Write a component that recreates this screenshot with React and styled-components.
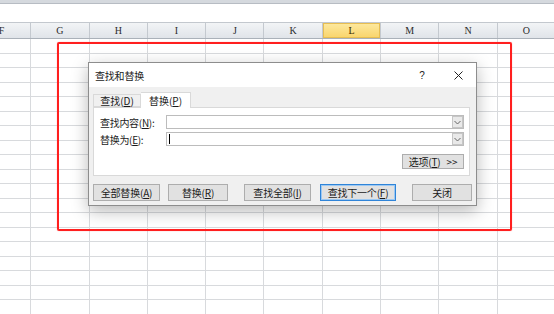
import React from 'react'
import styled, { createGlobalStyle } from 'styled-components'

const GlobalStyle = createGlobalStyle`
  html, body {
    margin: 0;
    padding: 0;
  }
  body {
    background: #fff;
    font-family: "Noto Sans CJK SC", "Noto Sans", sans-serif;
    color: #1a1a1a;
  }
`

const COLUMNS = ['F', 'G', 'H', 'I', 'J', 'K', 'L', 'M', 'N', 'O']
const ROW_COUNT = 20

const Screen = styled.div`
  position: relative;
  width: 554px;
  height: 314px;
  overflow: hidden;
  background: #fff;
`

const RibbonEdge = styled.div`
  height: 3px;
  background: #d5d9de;
  border-bottom: 1px solid #b7bcc3;
`

const FormulaStrip = styled.div`
  height: 18px;
  background: #fff;
`

const Sheet = styled.div`
  margin-left: -27px;
`

const HeaderRow = styled.div`
  display: flex;
  height: 17px;
  box-sizing: border-box;
  border-top: 1px solid #c3c8ce;
  border-bottom: 1px solid #aab1b9;
  background: linear-gradient(#f2f4f6, #e0e4e9);
`

const ColumnHeader = styled.div`
  flex: 0 0 58.3px;
  box-sizing: border-box;
  display: flex;
  align-items: center;
  justify-content: center;
  border-right: 1px solid #c4c9cf;
  font-family: "Liberation Serif", serif;
  font-size: 10px;
  color: ${p => (p.$selected ? '#3a2c00' : '#2b2b2b')};
  background: ${p => (p.$selected ? 'linear-gradient(#fde9a0, #f9d46a)' : 'transparent')};
  box-shadow: ${p => (p.$selected ? 'inset 0 0 0 1px #e7be52' : 'none')};
`

const GridRow = styled.div`
  display: flex;
  height: 14.5px;
`

const Cell = styled.div`
  flex: 0 0 58.3px;
  box-sizing: border-box;
  border-right: 1px solid #d8dadd;
  border-bottom: 1px solid #d8dadd;
`

const Annotation = styled.div`
  position: absolute;
  left: 57px;
  top: 42px;
  width: 455px;
  height: 189px;
  box-sizing: border-box;
  border: 2px solid #ff1f1f;
  border-radius: 2px;
  box-shadow: 0 0 1px rgba(255, 40, 40, 0.6);
  pointer-events: none;
`

const Dialog = styled.div`
  position: absolute;
  left: 88px;
  top: 62px;
  width: 389px;
  height: 144px;
  box-sizing: border-box;
  border: 1px solid #8d8d8d;
  background: #f0f0f0;
  box-shadow: 0 5px 16px rgba(0, 0, 0, 0.28);
  display: flex;
  flex-direction: column;
  font-size: 10px;
`

const TitleBar = styled.div`
  height: 24px;
  flex: 0 0 24px;
  background: #fff;
  display: flex;
  align-items: center;
  padding-left: 6px;
`

const Title = styled.div`
  flex: 1;
  font-size: 10px;
  letter-spacing: -0.2px;
`

const TitleButton = styled.div`
  width: ${p => p.$w}px;
  display: flex;
  align-items: center;
  justify-content: center;
  font-family: "Liberation Sans", sans-serif;
  font-size: 10px;
  color: #222;
`

const Body = styled.div`
  flex: 1;
  padding: 5px 4px 0 4px;
  display: flex;
  flex-direction: column;
`

const Tabs = styled.div`
  display: flex;
  align-items: flex-end;
  height: 15px;
  position: relative;
  z-index: 1;
`

const Tab = styled.div`
  width: ${p => p.$w}px;
  height: ${p => (p.$active ? 16 : 13)}px;
  box-sizing: border-box;
  display: flex;
  align-items: center;
  justify-content: center;
  border: 1px solid #d9d9d9;
  border-bottom: ${p => (p.$active ? 'none' : '1px solid #d9d9d9')};
  border-left: ${p => (p.$active ? 'none' : '1px solid #d9d9d9')};
  margin-bottom: ${p => (p.$active ? -1 : 0)}px;
  background: ${p => (p.$active ? '#fff' : '#f0f0f0')};
  font-size: 10px;
  line-height: 1;
  padding-top: ${p => (p.$active ? 1 : 0)}px;
`

const Panel = styled.div`
  height: 69px;
  box-sizing: border-box;
  margin-right: 2px;
  background: #fff;
  border: 1px solid #d9d9d9;
  padding: 7px 5px 0 6px;
  display: flex;
  flex-direction: column;
`

const FieldRow = styled.div`
  display: flex;
  align-items: center;
  height: 14px;
  margin-bottom: 3px;
`

const Label = styled.div`
  flex: 0 0 66px;
  font-size: 10px;
  white-space: nowrap;
  letter-spacing: -0.3px;
`

const Combo = styled.div`
  flex: 1;
  height: 14px;
  box-sizing: border-box;
  border: 1px solid #bcbcbc;
  background: #fff;
  display: flex;
  align-items: stretch;
`

const ComboText = styled.div`
  flex: 1;
  display: flex;
  align-items: center;
  padding-left: 2px;
`

const Caret = styled.div`
  width: 1px;
  height: 10px;
  background: #000;
`

const DropButton = styled.div`
  flex: 0 0 11px;
  margin: 0;
  box-sizing: border-box;
  border: 1px solid #c6c6c6;
  background: #e9e9e9;
  display: flex;
  align-items: center;
  justify-content: center;
`

const OptionsRow = styled.div`
  display: flex;
  justify-content: flex-end;
  margin-top: 5px;
`

const Button = styled.div`
  width: ${p => p.$w}px;
  height: ${p => p.$h || 17}px;
  margin-left: ${p => p.$ml || 0}px;
  box-sizing: border-box;
  display: flex;
  align-items: center;
  justify-content: center;
  gap: ${p => p.$gap || 0}px;
  background: #e1e1e1;
  border: 1px solid ${p => (p.$default ? '#2f84d8' : '#adadad')};
  box-shadow: ${p => (p.$default ? 'inset 0 0 0 1px #9cc8f2' : 'none')};
  font-size: 10px;
  white-space: nowrap;
  letter-spacing: -0.2px;
`

const ButtonBar = styled.div`
  display: flex;
  margin-top: 8px;
`

const Chevron = () => (
  <svg width="7" height="5" viewBox="0 0 7 5">
    <path d="M0.5 1 L3.5 4 L6.5 1" fill="none" stroke="#666" strokeWidth="1" />
  </svg>
)

const CloseIcon = () => (
  <svg width="9" height="9" viewBox="0 0 9 9">
    <path d="M0.5 0.5 L8.5 8.5 M8.5 0.5 L0.5 8.5" stroke="#222" strokeWidth="1" />
  </svg>
)

const Key = ({ children }) => <u>{children}</u>

const App = () => (
  <Screen>
    <GlobalStyle />
    <RibbonEdge />
    <FormulaStrip />
    <Sheet>
      <HeaderRow>
        {COLUMNS.map(c => (
          <ColumnHeader key={c} $selected={c === 'L'}>{c}</ColumnHeader>
        ))}
      </HeaderRow>
      {Array.from({ length: ROW_COUNT }).map((_, r) => (
        <GridRow key={r}>
          {COLUMNS.map(c => <Cell key={c} />)}
        </GridRow>
      ))}
    </Sheet>

    <Annotation />

    <Dialog>
      <TitleBar>
        <Title>查找和替换</Title>
        <TitleButton $w={36}>?</TitleButton>
        <TitleButton $w={36}><CloseIcon /></TitleButton>
      </TitleBar>
      <Body>
        <Tabs>
          <Tab $w={48}>查找(<Key>D</Key>)</Tab>
          <Tab $w={50} $active>替换(<Key>P</Key>)</Tab>
        </Tabs>
        <Panel>
          <FieldRow>
            <Label>查找内容(<Key>N</Key>):</Label>
            <Combo>
              <ComboText />
              <DropButton><Chevron /></DropButton>
            </Combo>
          </FieldRow>
          <FieldRow>
            <Label>替换为(<Key>E</Key>):</Label>
            <Combo>
              <ComboText><Caret /></ComboText>
              <DropButton><Chevron /></DropButton>
            </Combo>
          </FieldRow>
          <OptionsRow>
            <Button $w={62} $h={15} $gap={6}>
              <span>选项(<Key>T</Key>)</span>
              <span>&gt;&gt;</span>
            </Button>
          </OptionsRow>
        </Panel>
        <ButtonBar>
          <Button $w={67}>全部替换(<Key>A</Key>)</Button>
          <Button $w={60} $ml={8}>替换(<Key>R</Key>)</Button>
          <Button $w={67} $ml={16}>查找全部(<Key>I</Key>)</Button>
          <Button $w={76} $ml={9} $default>查找下一个(<Key>F</Key>)</Button>
          <Button $w={60} $ml={16}>关闭</Button>
        </ButtonBar>
      </Body>
    </Dialog>
  </Screen>
)

export default App
